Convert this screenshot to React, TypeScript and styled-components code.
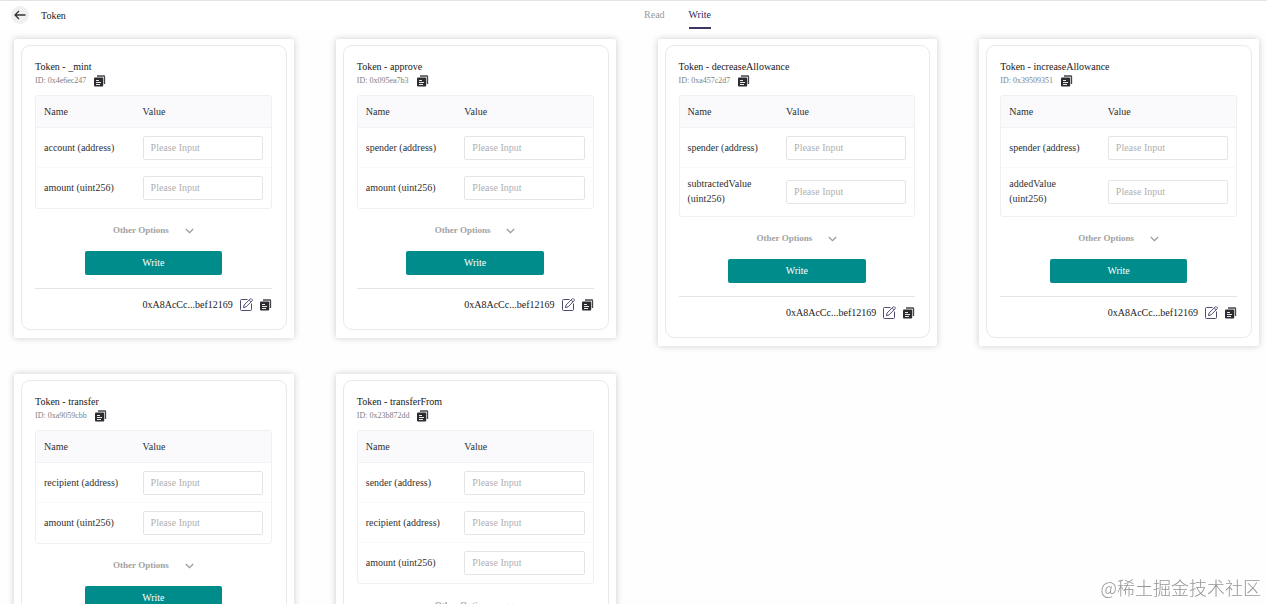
import React from "react";
import styled, { createGlobalStyle } from "styled-components";

const GlobalStyle = createGlobalStyle`
  * { box-sizing: border-box; }
  body {
    margin: 0;
    background: #fefefe;
    color: #303030;
    font-family: "Liberation Serif", "Times New Roman", "Noto Sans CJK SC", serif;
    font-size: 10px;
    line-height: 15px;
  }
  button, input { font: inherit; }
`;

const Page = styled.div`
  height: 100vh;
  display: flex;
  flex-direction: column;
  overflow: hidden;
`;

const Header = styled.header`
  display: grid;
  grid-template-columns: 88px 1fr;
  flex: none;
  height: 29px;
  border-top: 1px solid #e4e4e4;
  background: #fff;
`;

const Crumb = styled.div`
  display: flex;
  align-items: center;
  gap: 12px;
  padding-left: 11px;
  color: #222;
`;

const BackButton = styled.button`
  display: grid;
  place-items: center;
  width: 18px;
  height: 18px;
  padding: 0;
  border: 0;
  border-radius: 50%;
  background: #f0f0f0;
`;

const Tabs = styled.nav`
  display: flex;
  justify-content: center;
  gap: 24px;
`;

const Tab = styled.a<{ $active?: boolean }>`
  display: flex;
  align-items: center;
  border-bottom: 2px solid ${(p) => (p.$active ? "#3d3562" : "transparent")};
  color: ${(p) => (p.$active ? "#2f2658" : "#999")};
  text-decoration: none;
`;

const Main = styled.main`
  flex: 1;
  min-height: 0;
  display: grid;
  grid-template-columns: repeat(4, minmax(0, 1fr));
  align-items: start;
  align-content: start;
  gap: 28px 42px;
  padding: 10px 8px 28px 14px;
  overflow-y: auto;
  scrollbar-width: none;
`;

const Card = styled.article`
  padding: 6px 7px 8px;
  border-radius: 2px;
  background: #fff;
  box-shadow: 0 0 7px rgba(0, 0, 0, 0.2);
`;

const CardBody = styled.div`
  padding: 13px 14px 16px 13px;
  border: 1px solid #e9e9ec;
  border-radius: 9px;
`;

const Title = styled.h2`
  margin: 0;
  color: #181818;
  font-size: 10px;
  font-weight: 400;
`;

const IdLine = styled.div`
  display: flex;
  align-items: center;
  gap: 8px;
  height: 14px;
  margin-bottom: 7px;
  color: #808080;
  font-size: 8px;
  line-height: 14px;
`;

const IconButton = styled.button`
  display: grid;
  padding: 0;
  border: 0;
  background: none;
`;

const Params = styled.table`
  width: 100%;
  table-layout: fixed;
  border: 1px solid #f0f0f3;
  border-radius: 3px;
  border-spacing: 0;
`;

const HeadCell = styled.th<{ $name?: boolean }>`
  width: ${(p) => (p.$name ? "42%" : "auto")};
  height: 32px;
  padding: 0 8px 1px;
  border-bottom: 1px solid #f2f2f5;
  background: #fafafc;
  font-weight: 400;
  text-align: left;
`;

const Cell = styled.td`
  padding: 8px;
  tr:not(:last-child) > & {
    padding-bottom: 7px;
    border-bottom: 1px solid #f9f9fa;
  }
`;

const ParamLabel = styled.label`
  display: block;
  padding-bottom: 2px;
`;

const ParamInput = styled.input`
  display: block;
  width: 100%;
  height: 24px;
  padding: 0 7px 1px;
  border: 1px solid #e4e4e4;
  border-radius: 2px;
  background: #fff;
  color: #303030;
  &::placeholder { color: #b0b0b0; opacity: 1; }
`;

const OptionsButton = styled.button`
  display: flex;
  align-items: center;
  gap: 16px;
  margin: 14px auto 13px;
  padding: 0;
  border: 0;
  background: none;
  color: #a2a2a2;
  font-size: 9px;
  font-weight: 700;
  line-height: 15px;
`;

const WriteButton = styled.button`
  display: block;
  width: 58%;
  height: 24px;
  margin: 0 auto 13px;
  padding: 0 0 2px;
  border: 0;
  border-radius: 2px;
  background: #008c8a;
  color: #fff;
`;

const Footer = styled.footer`
  display: flex;
  align-items: center;
  justify-content: flex-end;
  gap: 7px;
  height: 25px;
  padding-top: 7px;
  border-top: 1px solid #e4e4e4;
  color: #222;
`;

const Watermark = styled.div`
  position: fixed;
  right: 6px;
  bottom: 4px;
  color: #969696;
  font-family: "Noto Sans CJK SC", sans-serif;
  font-size: 18px;
  font-weight: 300;
  line-height: 26px;
  pointer-events: none;
`;

const ArrowIcon = () => (
  <svg width="12" height="10" viewBox="0 0 12 10" fill="none" stroke="#333" strokeWidth="1.3">
    <path d="M11.5 5H1M5 1 1 5l4 4" />
  </svg>
);

const CopyIcon = () => (
  <svg width="12" height="12" viewBox="0 0 12 12">
    <path d="M3 1h7c.3 0 .5.2.5.5V9" fill="none" stroke="#45454c" strokeWidth="1.3" />
    <rect x="0" y="2.4" width="9.2" height="9.2" rx="1" fill="#2b2b30" />
    <path d="M2 5.5h3M2 7.5h5M2 9.5h4" stroke="#fff" strokeWidth="0.9" />
  </svg>
);

const EditIcon = () => (
  <svg width="13" height="13" viewBox="0 0 13 13" fill="none" stroke="#514b70" strokeWidth="1">
    <path d="M7.5 1.5h-6a1 1 0 0 0-1 1v9a1 1 0 0 0 1 1h9a1 1 0 0 0 1-1V5.5" />
    <path d="m3.4 9.6.7-2.6L10.3.8c.3-.3.8-.3 1.1 0l.8.8c.3.3.3.8 0 1.1L6 8.9l-2.6.7Z" />
    <path d="m9.2 2 1.8 1.8" />
  </svg>
);

const ChevronIcon = () => (
  <svg width="9" height="6" viewBox="0 0 9 6" fill="none" stroke="#999" strokeWidth="1.2">
    <path d="m.8 1 3.7 3.7L8.2 1" />
  </svg>
);

interface Method {
  name: string;
  id: string;
  params: string[];
}

const methods: Method[] = [
  { name: "_mint", id: "0x4e6ec247", params: ["account (address)", "amount (uint256)"] },
  { name: "approve", id: "0x095ea7b3", params: ["spender (address)", "amount (uint256)"] },
  { name: "decreaseAllowance", id: "0xa457c2d7", params: ["spender (address)", "subtractedValue (uint256)"] },
  { name: "increaseAllowance", id: "0x39509351", params: ["spender (address)", "addedValue (uint256)"] },
  { name: "transfer", id: "0xa9059cbb", params: ["recipient (address)", "amount (uint256)"] },
  { name: "transferFrom", id: "0x23b872dd", params: ["sender (address)", "recipient (address)", "amount (uint256)"] },
];

const MethodCard = ({ method }: { method: Method }) => (
  <Card>
    <CardBody>
      <Title>Token - {method.name}</Title>
      <IdLine>
        <span>ID: {method.id}</span>
        <IconButton type="button" aria-label="Copy ID"><CopyIcon /></IconButton>
      </IdLine>
      <Params>
        <thead>
          <tr>
            <HeadCell $name>Name</HeadCell>
            <HeadCell>Value</HeadCell>
          </tr>
        </thead>
        <tbody>
          {method.params.map((param, i) => {
            const inputId = `${method.id}-${i}`;
            return (
              <tr key={param}>
                <Cell><ParamLabel htmlFor={inputId}>{param}</ParamLabel></Cell>
                <Cell><ParamInput id={inputId} placeholder="Please Input" /></Cell>
              </tr>
            );
          })}
        </tbody>
      </Params>
      <OptionsButton type="button">
        Other Options
        <ChevronIcon />
      </OptionsButton>
      <WriteButton type="button">Write</WriteButton>
      <Footer>
        <span>0xA8AcCc...bef12169</span>
        <IconButton type="button" aria-label="Edit address"><EditIcon /></IconButton>
        <IconButton type="button" aria-label="Copy address"><CopyIcon /></IconButton>
      </Footer>
    </CardBody>
  </Card>
);

export default function App() {
  return (
    <Page>
      <GlobalStyle />
      <Header>
        <Crumb>
          <BackButton type="button" aria-label="Back"><ArrowIcon /></BackButton>
          <span>Token</span>
        </Crumb>
        <Tabs>
          <Tab href="#read">Read</Tab>
          <Tab href="#write" $active>Write</Tab>
        </Tabs>
      </Header>
      <Main>
        {methods.map((m) => <MethodCard key={m.id} method={m} />)}
      </Main>
      <Watermark>@稀土掘金技术社区</Watermark>
    </Page>
  );
}
